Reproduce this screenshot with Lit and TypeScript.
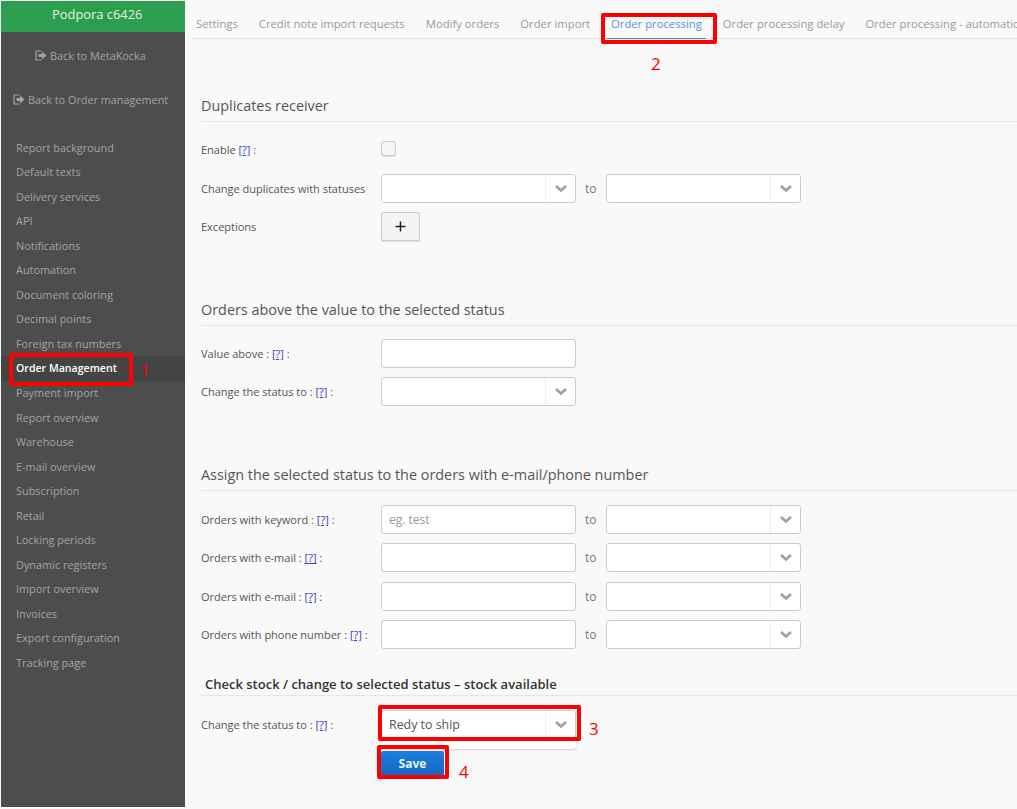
import { LitElement, html, css, svg } from "lit";
import { customElement } from "lit/decorators.js";

const nav = ["Report background","Default texts","Delivery services","API","Notifications","Automation","Document coloring","Decimal points","Foreign tax numbers","Order Management","Payment import","Report overview","Warehouse","E-mail overview","Subscription","Retail","Locking periods","Dynamic registers","Import overview","Invoices","Export configuration","Tracking page"];
const tabs = ["Settings","Credit note import requests","Modify orders","Order import","Order processing","Order processing delay","Order processing - automation"];

const logout = svg`<svg width="12" height="11" viewBox="0 0 12 11"><path d="M6.5 1H1v9h5.5" fill="none" stroke="currentColor" stroke-width="1.2"/><path d="M3.5 4h3.5V1.5L11.5 5.5 7 9.5V7H3.5z" fill="currentColor"/></svg>`;

@customElement("app-root")
export class AppRoot extends LitElement {
  static styles = css`
    :host { display: block; position: relative; width: 1017px; height: 809px; overflow: hidden; background: #f9f9f9; font-family: "Open Sans", sans-serif; color: #555; box-sizing: border-box; padding: 1px 0 2px 1px; }
    * { box-sizing: border-box; }
    .app { display: flex; height: 100%; }
    .side { width: 184px; flex: none; background: #4d4d4d; color: #a3a3a3; font-size: 11px; }
    .brand { height: 31px; background: #2c9e50; color: #e6f5dc; font-size: 12.9px; line-height: 27px; padding-left: 51px; }
    .back { display: flex; align-items: center; gap: 3px; height: 44px; font-size: 10.85px; }
    .back.a { margin-top: 1px; padding-left: 34px; }
    .back.b { padding-left: 12px; }
    .nav { margin-top: 14.5px; }
    .nav div { height: 24.55px; line-height: 24px; padding-left: 15px; font-size: 10.9px; }
    .nav .on { background: #444; color: #fff; font-weight: 600; font-size: 10.6px; }
    .main { flex: 1; min-width: 0; padding-left: 7px; overflow: hidden; }
    .tabs { display: flex; gap: 13px; height: 38px; border-bottom: 1px solid #e2e2e2; white-space: nowrap; font-size: 11.28px; color: #9a9a9a; }
    .tabs div { padding: 15px 4px 0; height: 38px; }
    .tabs .on { color: #5b93d8; border-bottom: 1px solid #4a86d0; }
    .sec { margin-left: 9px; }
    h2 { margin: 0; font-weight: 400; font-size: 14.4px; color: #555; line-height: 20px; border-bottom: 1px solid #e6e6e6; height: 27px; padding-top: 1px; }
    .s1 { margin-top: 56px; }
    .s2 { margin-top: 58px; }
    .s3 { margin-top: 58px; }
    .s4 { margin-top: 26px; }
    .s4 h2 { font-size: 13px; font-weight: 600; color: #333; padding-left: 4px; height: 21px; line-height: 18px; padding-top: 0; }
    .row { display: grid; grid-template-columns: 180px 195px 30px 195px; align-items: center; font-size: 11px; }
    .row > .to { font-size: 12px; color: #777; padding-left: 9px; }
    a { color: #3a3ac8; text-decoration: underline; }
    .field { height: 29px; background: #fff; border: 1px solid #ccc; border-radius: 3px; display: flex; align-items: center; font-size: 12px; padding-left: 7px; color: #555; }
    .field.ph { color: #999; }
    .sel { padding-left: 0; }
    .sel .v { flex: 1; padding-left: 7px; font-size: 12.4px; }
    .sel .c { width: 30px; height: 100%; border-left: 1px solid #eee; display: flex; align-items: center; justify-content: center; }
    .check { width: 15px; height: 15px; margin-top: -3px; border: 1px solid #ccc; border-radius: 3px; background: #f5f5f5; box-shadow: 0 1px 1px #ddd; }
    .plus { width: 39px; height: 29px; border: 1px solid #ccc; border-radius: 2px; background: #f4f4f4; display: flex; align-items: center; justify-content: center; box-shadow: 0 1px 1px #ddd; }
    .exc { margin-top: -1px; }
    .save { margin: 2px 0 0 180px; width: 63px; height: 25px; border-radius: 2px; background: linear-gradient(#1b7fe0, #1566bd); color: #e8f0fa; font-size: 12px; font-weight: 700; display: flex; align-items: center; justify-content: center; }
    .menu { margin-left: 180px; width: 195px; height: 10px; background: #fff; border-radius: 0 0 3px 3px; box-shadow: 0 1px 2px #ccc; }
    .box { position: absolute; border: 4px solid #f00; border-radius: 2px; }
    .num { position: absolute; color: #f00; font-size: 17px; line-height: 20px; font-family: "Open Sans", sans-serif; font-weight: 400; }
  `;

  chev() {
    return svg`<svg width="14" height="9" viewBox="0 0 14 9"><path d="M2 2l5 4.5L12 2" fill="none" stroke="#a0a0a0" stroke-width="2.6"/></svg>`;
  }
  sel(v = "") {
    return html`<div class="field sel"><span class="v">${v}</span><span class="c">${this.chev()}</span></div>`;
  }
  q() { return html`<a>[?]</a>`; }

  render() {
    return html`
      <div class="app">
        <aside class="side">
          <div class="brand">Podpora c6426</div>
          <div class="back a">${logout}<span>Back to MetaKocka</span></div>
          <div class="back b">${logout}<span>Back to Order management</span></div>
          <div class="nav">${nav.map(n => html`<div class=${n === "Order Management" ? "on" : ""}>${n}</div>`)}</div>
        </aside>
        <main class="main">
          <div class="tabs">${tabs.map(t => html`<div class=${t === "Order processing" ? "on" : ""}>${t}</div>`)}</div>

          <section class="sec s1">
            <h2>Duplicates receiver</h2>
            <div class="row" style="height:27px;margin-top:14px"><span>Enable ${this.q()} :</span><span class="check"></span></div>
            <div class="row" style="margin-top:11px"><span>Change duplicates with statuses</span>${this.sel()}<span class="to">to</span>${this.sel()}</div>
            <div class="row" style="margin-top:9px"><span class="exc">Exceptions</span><span class="plus"><svg width="11" height="11" viewBox="0 0 11 11"><path d="M5.5 .5v10M.5 5.5h10" stroke="#222" stroke-width="1.5"/></svg></span></div>
          </section>

          <section class="sec s2">
            <h2>Orders above the value to the selected status</h2>
            <div class="row" style="margin-top:13px"><span>Value above : ${this.q()} :</span><div class="field"></div></div>
            <div class="row" style="margin-top:9px"><span>Change the status to : ${this.q()} :</span>${this.sel()}</div>
          </section>

          <section class="sec s3">
            <h2>Assign the selected status to the orders with e-mail/phone number</h2>
            <div class="row" style="margin-top:14px"><span>Orders with keyword : ${this.q()} :</span><div class="field ph">eg. test</div><span class="to">to</span>${this.sel()}</div>
            <div class="row" style="margin-top:9.33px"><span>Orders with e-mail : ${this.q()} :</span><div class="field"></div><span class="to">to</span>${this.sel()}</div>
            <div class="row" style="margin-top:9.33px"><span>Orders with e-mail : ${this.q()} :</span><div class="field"></div><span class="to">to</span>${this.sel()}</div>
            <div class="row" style="margin-top:9.33px"><span>Orders with phone number : ${this.q()} :</span><div class="field"></div><span class="to">to</span>${this.sel()}</div>
          </section>

          <section class="sec s4">
            <h2>Check stock / change to selected status – stock available</h2>
            <div class="row" style="margin-top:14px"><span>Change the status to : ${this.q()} :</span>${this.sel("Redy to ship")}</div>
            <div class="menu"></div>
            <div class="save">Save</div>
          </section>
        </main>
      </div>

      <div class="box" style="left:9px;top:353px;width:124px;height:33px"></div><span class="num" style="left:140px;top:361px">1</span>
      <div class="box" style="left:601px;top:13px;width:116px;height:31px"></div><span class="num" style="left:651px;top:54px">2</span>
      <div class="box" style="left:378px;top:705px;width:203px;height:36px"></div><span class="num" style="left:589px;top:719px">3</span>
      <div class="box" style="left:377px;top:745px;width:72px;height:34px"></div><span class="num" style="left:459px;top:762px">4</span>
    `;
  }
}
